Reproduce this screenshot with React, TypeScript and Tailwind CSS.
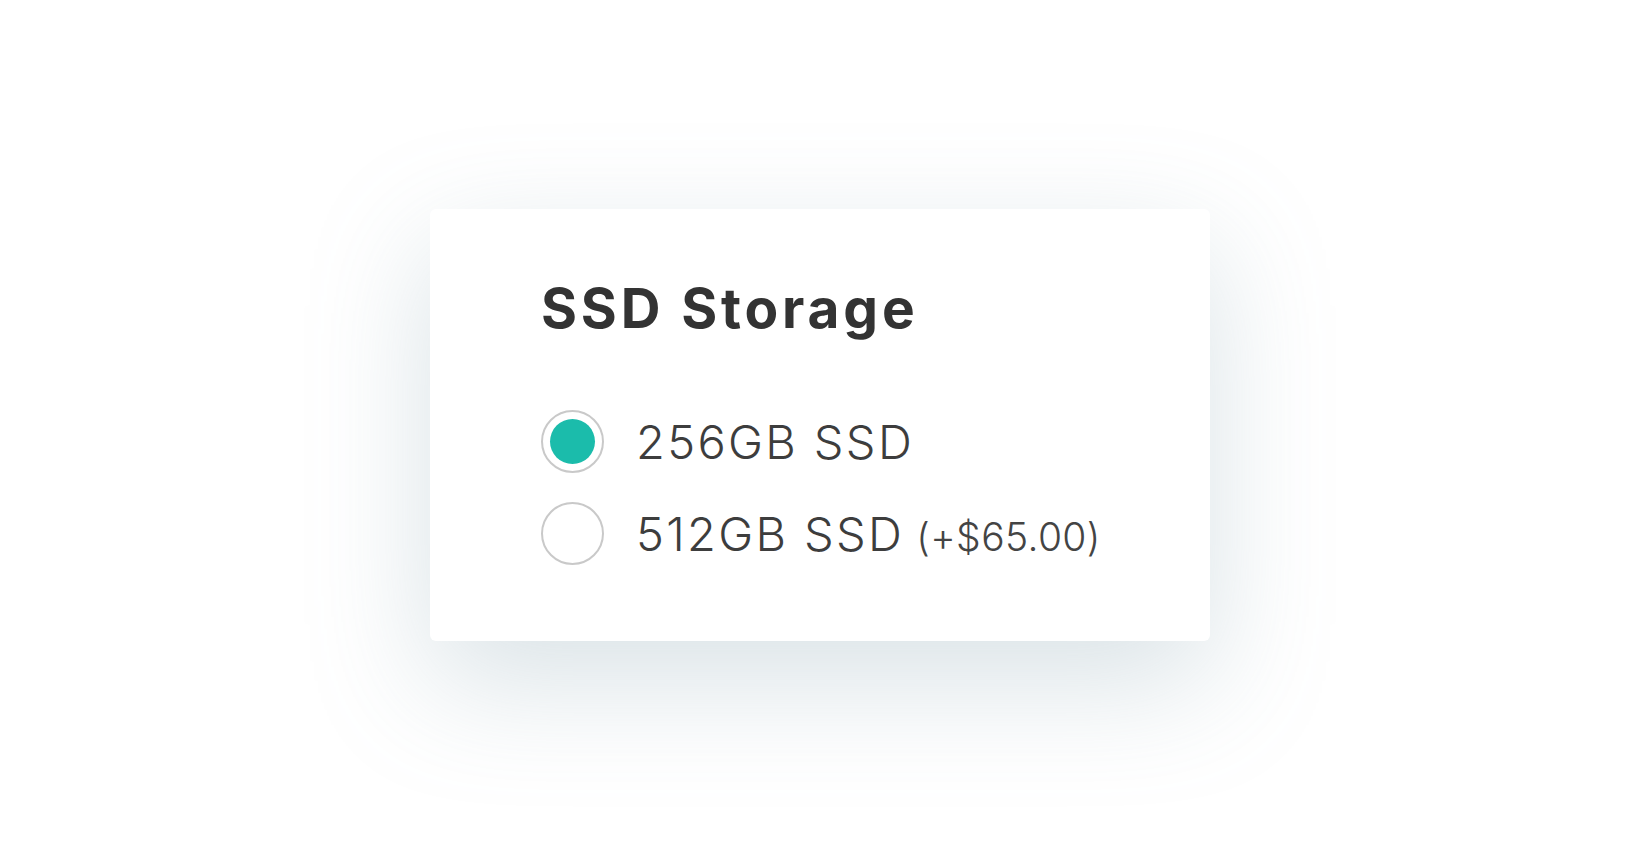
import { useState } from 'react'

const OPTIONS = [
  { id: '256', label: '256GB SSD', extra: '' },
  { id: '512', label: '512GB SSD', extra: '(+$65.00)' },
]

const App = () => {
  const [selected, setSelected] = useState('256')

  return (
    <div className="flex h-screen w-full items-center justify-center bg-white font-['Inter',sans-serif]">
      {/* card with the soft blue-grey shadow */}
      <div className="w-[780px] h-[432px] rounded-md bg-white pl-[111px] pt-[72px] shadow-[0_40px_120px_rgba(120,150,165,0.28)]">
        <h2 className="text-[55px] font-bold leading-none tracking-[0.07em] text-[#333333]">
          SSD Storage
        </h2>

        <div className="mt-[74px] flex flex-col gap-[29px]">
          {OPTIONS.map((option) => (
            <label
              key={option.id}
              className="flex cursor-pointer items-center gap-[32px]"
              onClick={() => setSelected(option.id)}
            >
              <span className="flex h-[63px] w-[63px] shrink-0 items-center justify-center rounded-full border-2 border-[#c9c9c9] bg-white">
                {selected === option.id && (
                  <span className="h-[45px] w-[45px] rounded-full bg-[#1bbcab]" />
                )}
              </span>
              <span className="text-[47px] font-light leading-none tracking-[0.05em] text-[#3d3d3d]">
                {option.label}
                {option.extra && (
                  <span className="ml-[12px] text-[39px] tracking-[0.01em] text-[#444444]">
                    {option.extra}
                  </span>
                )}
              </span>
            </label>
          ))}
        </div>
      </div>
    </div>
  )
}

export default App
